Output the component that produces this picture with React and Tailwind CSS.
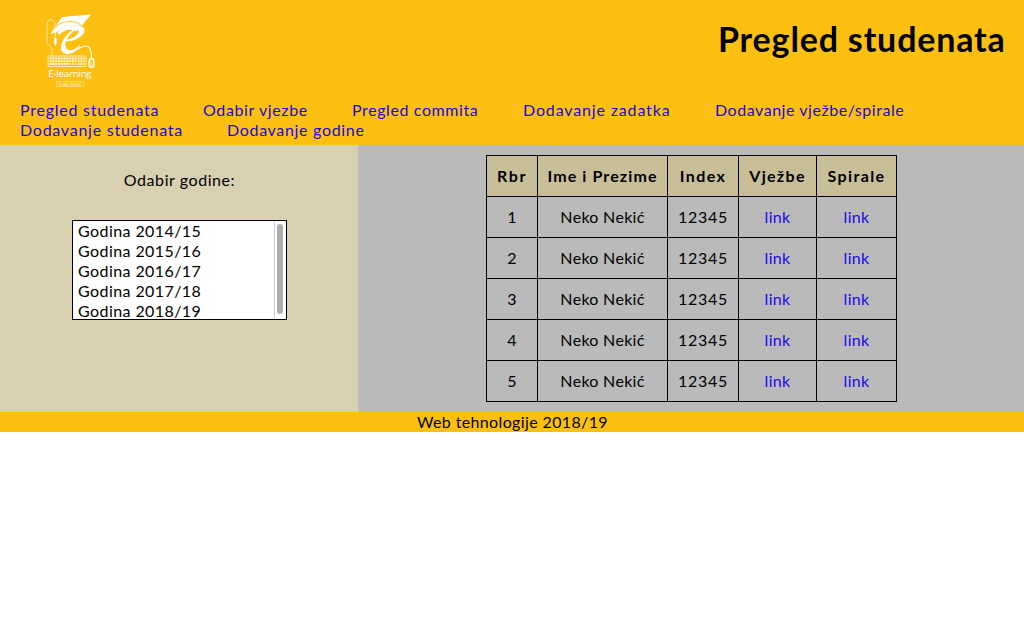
const navRows = [
  [
    { label: "Pregled studenata", cls: "w-[139px] tracking-[0.75px]" },
    { label: "Odabir vjezbe", cls: "w-[105px] tracking-[0.62px]" },
    { label: "Pregled commita", cls: "w-[127px] tracking-[0.6px]" },
    { label: "Dodavanje zadatka", cls: "w-[148px] tracking-[0.85px]" },
    { label: "Dodavanje vježbe/spirale", cls: "w-[190px] tracking-[0.54px]" },
  ],
  [
    { label: "Dodavanje studenata", cls: "w-[163px] tracking-[0.75px]" },
    { label: "Dodavanje godine", cls: "w-[137px] tracking-[0.68px]" },
  ],
];

const years = ["2014/15", "2015/16", "2016/17", "2017/18", "2018/19"];

const columns = [
  { title: "Rbr", cls: "w-[51px] tracking-[1.6px]" },
  { title: "Ime i Prezime", cls: "w-[130px] tracking-[1.1px]" },
  { title: "Index", cls: "w-[71px] tracking-[1.4px]" },
  { title: "Vježbe", cls: "w-[78px] tracking-[1.3px]" },
  { title: "Spirale", cls: "w-[80px] tracking-[1.4px]" },
];

function Logo() {
  return (
    <svg className="h-[80px] w-[56px]" viewBox="42 10 56 80" fill="none" stroke="#fff">
      <path d="M52 55v-5c0-5-5-4-5-9V25c0-7 8-7 8 0v4" strokeWidth="1" opacity=".6" />
      <path d="M55.3 31v15" strokeWidth=".9" opacity=".9" />
      <path d="M54 38h2.600v5l-1.300 3-1.300-3z" fill="#fff" stroke="none" />
      <path d="M50.500 34L62 17l29-2.500-11.500 14C70 22 62 27 57 32z" fill="#fff" stroke="none" />
      <path d="M55 27.500C62 20 75 20 81 25" stroke="#fdc010" strokeWidth=".9" />
      <path d="M57.500 32.500C63 24.500 73 24 79 28l-2.500 3.500C70 28 64 30 59 35z" fill="#fff" stroke="none" />
      <path
        fillRule="evenodd"
        d="M65.500 41.500C74 42 84.500 36 84.500 30c0-5-8-4-14 1.500C62 38.500 58 49 63.500 53c5.500 3 14-1.500 17-8.500-5 5-10 7-12.500 5.500-2.500-1.500-3-5-2.500-8.500zM67 39.500c2-5 8-10.500 11-9.500 3 2-4 9-11 9.500z"
        fill="#fff"
        stroke="none"
      />
      <path d="M65 53c9 2 13-7 21-7 5 0 5.500 6 5.500 12" strokeWidth="1.100" />
      <rect x="48" y="56" width="38" height="10.500" rx="1" strokeWidth=".8" opacity=".9" />
      <path d="M49.500 58.500h35M49.500 61.300h35M49.500 64h35" strokeWidth="2.100" strokeDasharray="2.100 .7" opacity=".85" />
      <path d="M77.500 57v9M70.500 62v4M70 64h8" stroke="#fdc010" strokeWidth=".8" />
      <rect x="89.200" y="58.500" width="4.700" height="9" rx="2.350" strokeWidth="1.300" fill="#fff" fillOpacity=".35" />
      <path d="M91.500 60v3" stroke="#fdc010" strokeWidth=".8" />
      <text x="48.200" y="77.200" textLength="43.500" fontSize="9.800" fontFamily="Open Sans, sans-serif" fill="#fff" stroke="none">E-learning</text>
      <rect x="56.500" y="81.500" width="27" height="5" strokeWidth=".6" opacity=".65" />
      <text x="58.500" y="86" textLength="23" fontSize="5" fontFamily="Liberation Sans, sans-serif" fill="#fff" stroke="none" opacity=".75">read more</text>
    </svg>
  );
}

export default function App() {
  return (
    <div className="w-[1024px] bg-white font-['Lato',sans-serif] text-base leading-5 text-black">
      <header className="h-[145px] bg-[#fdc010]">
        <div className="flex h-[100px] items-start justify-between pl-[42px] pr-[20px] pt-[10px]">
          <Logo />
          <h1 className="mt-[9px] w-[286px] whitespace-nowrap text-[34px] font-bold leading-10 tracking-[0.83px]">Pregled studenata</h1>
        </div>
        <nav className="pl-5">
          {navRows.map((row, i) => (
            <ul key={i} className="flex gap-[44px]">
              {row.map((item) => (
                <li key={item.label} className={`shrink-0 whitespace-nowrap text-[#1a08dc] ${item.cls}`}>
                  <a href="#">{item.label}</a>
                </li>
              ))}
            </ul>
          ))}
        </nav>
      </header>
      <main className="flex h-[267px]">
        <aside className="flex w-[358px] flex-col items-center bg-[#d9d0b1] pt-[25px]">
          <p className="pl-px tracking-[0.57px]">Odabir godine:</p>
          <div className="mt-[30px] flex h-[100px] w-[215px] overflow-hidden border border-black bg-white">
            <ul className="flex-1 pl-[5.500px]">
              {years.map((y) => (
                <li key={y} className="h-5 whitespace-nowrap tracking-[0.42px]">Godina {y}</li>
              ))}
            </ul>
            <div className="flex w-[12px] justify-center border-l border-[#cccccc] pt-[3px]">
              <div className="h-[90px] w-[6px] rounded-full bg-[#aeaeae]" />
            </div>
          </div>
        </aside>
        <section className="flex flex-1 justify-center bg-[#bababa] pt-[10px]">
          <table className="h-[247px] w-[411px] table-fixed border-collapse text-center">
            <thead>
              <tr className="h-[41px] bg-[#c8bf98]">
                {columns.map((c) => (
                  <th key={c.title} className={`whitespace-nowrap border border-black py-0 pl-px pr-0 font-bold ${c.cls}`}>{c.title}</th>
                ))}
              </tr>
            </thead>
            <tbody>
              {[1, 2, 3, 4, 5].map((n) => (
                <tr key={n} className="h-[41px]">
                  <td className="border border-black p-0 pl-px">{n}</td>
                  <td className="border border-black p-0 pl-px tracking-[0.3px]">Neko Nekić</td>
                  <td className="border border-black p-0 pl-px tracking-[0.7px]">12345</td>
                  <td className="border border-black p-0 pl-px tracking-[0.3px] text-[#1a08ee]"><a href="#">link</a></td>
                  <td className="border border-black p-0 pl-px tracking-[0.3px] text-[#1a08ee]"><a href="#">link</a></td>
                </tr>
              ))}
            </tbody>
          </table>
        </section>
      </main>
      <footer className="h-5 bg-[#fdc010] pl-px text-center tracking-[0.37px]">Web tehnologije 2018/19</footer>
    </div>
  );
}
